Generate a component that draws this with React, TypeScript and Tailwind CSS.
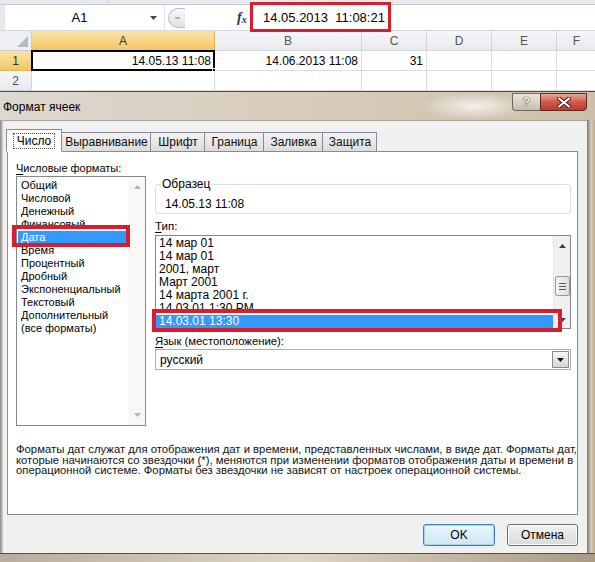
import React from "react";

const formats = [
  "Общий",
  "Числовой",
  "Денежный",
  "Финансовый",
  "Дата",
  "Время",
  "Процентный",
  "Дробный",
  "Экспоненциальный",
  "Текстовый",
  "Дополнительный",
  "(все форматы)",
];

const types = [
  "14 мар 01",
  "14 мар 01",
  "2001, март",
  "Март 2001",
  "14 марта 2001 г.",
  "14.03.01 1:30 PM",
  "14.03.01 13:30",
];

const tabs = [
  { label: "Число", w: "w-[56px]", active: true },
  { label: "Выравнивание", w: "w-[90px]" },
  { label: "Шрифт", w: "w-[55px]" },
  { label: "Граница", w: "w-[60px]" },
  { label: "Заливка", w: "w-[60px]" },
  { label: "Защита", w: "w-[55px]" },
];

const cols = [
  { name: "A", w: "w-[183px]", sel: true },
  { name: "B", w: "w-[147px]" },
  { name: "C", w: "w-[65px]" },
  { name: "D", w: "w-[65px]" },
  { name: "E", w: "w-[65px]" },
  { name: "F", w: "w-[40px]" },
];

function Arrow({ up, color = "#9a9a9a" }: { up?: boolean; color?: string }) {
  return (
    <svg width="7" height="4" viewBox="0 0 7 4">
      {up ? <path d="M0 4 L3.5 0 L7 4 Z" fill={color} /> : <path d="M0 0 L3.5 4 L7 0 Z" fill={color} />}
    </svg>
  );
}

function SheetHeader() {
  return (
    <div className="flex h-[20px]">
      <div className="w-[32px] shrink-0 relative bg-[#eef0f3] border-r border-b border-[#c9ced5]">
        <svg className="absolute right-[3px] bottom-[3px]" width="11" height="11" viewBox="0 0 11 11">
          <path d="M11 0 L11 11 L0 11 Z" fill="#b6bcc4" />
        </svg>
      </div>
      {cols.map((c) => (
        <div
          key={c.name}
          className={`${c.w} shrink-0 flex items-center justify-center border-r border-b text-[12px] ${
            c.sel
              ? "bg-gradient-to-b from-[#fbe3a6] to-[#f2c764] border-r-[#e1b353] border-b-[#f29436] text-[#333]"
              : "bg-gradient-to-b from-[#f6f7f9] to-[#e7eaee] border-[#d0d5db] text-[#555]"
          }`}
        >
          {c.name}
        </div>
      ))}
    </div>
  );
}

function SheetRow({ n, sel, cells }: { n: string; sel?: boolean; cells: string[] }) {
  return (
    <div className="flex h-[20px]">
      <div
        className={`w-[32px] shrink-0 flex items-center justify-center border-r border-b text-[12px] ${
          sel
            ? "bg-gradient-to-b from-[#fbe3a6] to-[#f2c764] border-r-[#f29436] border-b-[#e1b353] text-[#333]"
            : "bg-gradient-to-b from-[#f6f7f9] to-[#e7eaee] border-[#d0d5db] text-[#555]"
        }`}
      >
        {n}
      </div>
      {cols.map((c, i) => (
        <div
          key={c.name}
          className={`${c.w} shrink-0 relative flex items-center justify-end pr-[3px] border-r border-b border-[#dadcdd] bg-white text-[12px] text-black`}
        >
          {cells[i] || ""}
          {sel && i === 0 && (
            <>
              <div className="absolute -left-[1px] -top-[1px] -right-[1px] -bottom-[1px] border-2 border-black" />
              <div className="absolute -right-[4px] -bottom-[4px] w-[6px] h-[6px] bg-black border border-white" />
            </>
          )}
        </div>
      ))}
    </div>
  );
}

function Excel() {
  return (
    <div className="h-[91px] flex flex-col bg-white overflow-hidden">
      <div className="h-[5px] flex bg-[#e6eaef] border-b border-[#c3cad3]">
        <div className="w-[108px] border-r border-[#cfd5dc]" />
        <div className="w-[222px] border-r border-[#cfd5dc]" />
      </div>
      <div className="h-[26px] flex items-stretch border-b border-[#d5d9de] bg-white">
        <div className="w-[5px] bg-[#e6eaef]" />
        <div className="w-[160px] flex items-center border-r border-[#dde1e5]">
          <span className="flex-1 text-center text-[13px] pl-[4px]">A1</span>
          <span className="mr-[7px] mt-[1px]">
            <Arrow color="#444" />
          </span>
        </div>
        <div className="w-[70px] flex items-center">
          <div className="ml-[3px] w-[17px] h-[20px] rounded-l-full border border-[#b9bec5] border-r-0 bg-gradient-to-b from-[#f7f8f9] to-[#dfe3e7] flex items-center justify-center">
            <div className="w-[5px] h-[2px] bg-[#a5acb5] rounded-full" />
          </div>
        </div>
        <div className="w-[20px] flex items-center pl-[2px] font-['Liberation_Serif',serif] italic font-bold text-[14px] text-[#333]">
          f<span className="text-[10px] mt-[3px]">x</span>
        </div>
        <div className="flex-1 flex items-center pl-[8px] text-[13px]">14.05.2013&nbsp;&nbsp;11:08:21</div>
      </div>
      <SheetHeader />
      <SheetRow n="1" sel cells={["14.05.13 11:08", "14.06.2013 11:08", "31"]} />
      <SheetRow n="2" cells={[]} />
    </div>
  );
}

function TitleBar() {
  return (
    <div className="h-[29px] relative flex items-center border-t border-[#4f4b45] bg-gradient-to-r from-[#ddd8d0] via-[#d8ccbb] to-[#cdbfaa]">
      <div className="absolute left-[420px] top-0 w-[110px] h-[28px] bg-[radial-gradient(ellipse_at_center,rgba(255,255,255,0.75),rgba(255,255,255,0)_70%)]" />
      <span className="relative pl-[3px] pt-[1px] text-[12px] text-black">Формат ячеек</span>
      <div className="absolute right-[8px] top-[1px] flex">
        <div className="w-[28px] h-[18px] rounded-bl-[4px] border border-[#6d675f] border-r-0 bg-gradient-to-b from-[#ebe5dc] to-[#c8bdad] flex items-center justify-center text-[13px] font-bold text-[#f4f1ec] [text-shadow:0_0_1px_#333,0_0_1px_#333]">
          ?
        </div>
        <div className="w-[47px] h-[18px] rounded-br-[4px] border border-[#5a2a24] bg-gradient-to-b from-[#e7a79c] via-[#cf5a4c] to-[#c0392b] flex items-center justify-center">
          <svg width="14" height="11" viewBox="0 0 14 11">
            <path d="M2 1.5 L12 9.5 M12 1.5 L2 9.5" stroke="#3a1a16" strokeWidth="4" strokeLinecap="round" />
            <path d="M2 1.5 L12 9.5 M12 1.5 L2 9.5" stroke="#ffffff" strokeWidth="2.2" strokeLinecap="round" />
          </svg>
        </div>
      </div>
    </div>
  );
}

function FormatList() {
  return (
    <div className="w-[130px] h-[250px] flex border border-[#828790] bg-white">
      <div className="flex-1 pt-[1.5px] pl-[1px] text-[11px]">
        {formats.map((f) => (
          <div
            key={f}
            className={`h-[13px] leading-[13px] pl-[3px] whitespace-nowrap ${f === "Дата" ? "bg-[#3399ff] text-white" : ""}`}
          >
            {f}
          </div>
        ))}
      </div>
      <div className="w-[16px] flex flex-col items-center justify-between py-[8px] bg-[#f8f8f8] border-l border-[#efefef]">
        <Arrow up color="#b4b4b4" />
        <Arrow color="#b4b4b4" />
      </div>
    </div>
  );
}

function TypeList() {
  return (
    <div className="h-[94px] flex border border-[#828790] bg-white overflow-hidden">
      <div className="flex-1 pt-[0.5px] overflow-hidden">
        {types.map((t, i) => (
          <div
            key={i}
            className={`h-[13px] leading-[13px] pl-[3px] whitespace-nowrap ${i === 6 ? "bg-[#3399ff] text-white" : ""}`}
          >
            {t}
          </div>
        ))}
      </div>
      <div className="w-[17px] flex flex-col items-center bg-[#f0f0f0] border-l border-[#e6e6e6]">
        <div className="h-[17px] flex items-center justify-center pt-[2px]">
          <Arrow up color="#404040" />
        </div>
        <div className="flex-1 w-full flex flex-col items-center pt-[23px]">
          <div className="w-[15px] h-[20px] rounded-[2px] border border-[#979797] bg-gradient-to-r from-[#f4f4f4] to-[#dcdcdc] flex flex-col items-center justify-center gap-[2px]">
            <div className="w-[7px] h-px bg-[#5a5a5a]" />
            <div className="w-[7px] h-px bg-[#5a5a5a]" />
            <div className="w-[7px] h-px bg-[#5a5a5a]" />
          </div>
        </div>
        <div className="h-[17px] flex items-center justify-center">
          <Arrow color="#404040" />
        </div>
      </div>
    </div>
  );
}

function Dialog() {
  return (
    <div className="flex-1 flex flex-col">
      <TitleBar />
      <div className="flex-1 flex">
        <div className="w-[3px] shrink-0 bg-gradient-to-r from-[#8a8a8a] to-[#d8d2c8]" />
        <div className="flex-1 min-w-0 overflow-hidden flex flex-col bg-[#f0f0f0] border-t border-[#a9a49b]">
          {/* tabs */}
          <div className="flex items-end h-[30px] pl-[3px]">
            {tabs.map((t) => (
              <div
                key={t.label}
                className={`${t.w} shrink-0 flex items-center justify-center border border-[#898c95] ${
                  t.active
                    ? "h-[23px] -mb-px z-10 bg-white border-b-white"
                    : "h-[19px] -ml-px bg-gradient-to-b from-[#f3f3f3] to-[#dcdcdc] border-b-0 text-[#111]"
                }`}
              >
                {t.active ? (
                  <span className="px-[3px] leading-[14px] border border-dotted border-[#555]">{t.label}</span>
                ) : (
                  <span className="ml-px">{t.label}</span>
                )}
              </div>
            ))}
          </div>
          {/* panel */}
          <div className="ml-[4px] mr-[9px] h-[364px] bg-white border border-[#898c95] pl-[8px] pt-[8px] flex flex-col overflow-hidden">
            <div className="flex gap-[9px]">
              <div className="flex flex-col">
                <div className="h-[16px] leading-[16px] text-[11px]">
                  <span className="underline underline-offset-2">Ч</span>исловые форматы:
                </div>
                <FormatList />
              </div>
              <div className="w-[416px] flex flex-col">
                <div className="mt-[24px] h-[30px] relative border border-[#d5dfe5] rounded-[3px] pl-[9px] pt-[12px] leading-[14px]">
                  <span className="absolute left-[5px] -top-[8px] bg-white px-px leading-[14px]">Образец</span>
                  14.05.13 11:08
                </div>
                <div className="mt-[5px] h-[15px] leading-[15px] text-[11.5px]">
                  <span className="underline underline-offset-2">Т</span>ип:
                </div>
                <div className="mt-[1px]">
                  <TypeList />
                </div>
                <div className="mt-[5px] h-[14px] leading-[14px] text-[11.3px]">
                  <span className="underline underline-offset-2">Я</span>зык (местоположение):
                </div>
                <div className="mt-[1px] h-[21px] flex items-stretch border border-[#abadb3] bg-white">
                  <div className="flex-1 flex items-center pl-[4px]">русский</div>
                  <div className="w-[17px] m-px flex items-center justify-center border border-[#8c8c8c] bg-gradient-to-b from-[#f4f4f4] to-[#d5d5d5]">
                    <Arrow color="#111" />
                  </div>
                </div>
              </div>
            </div>
            <div className="mt-[18px] leading-[10.5px] text-[11.3px] text-[#111]">
              <div className="whitespace-nowrap">
                Форматы дат служат для отображения дат и времени, представленных числами, в виде дат. Форматы дат,
              </div>
              <div className="whitespace-nowrap">
                которые начинаются со звездочки (*), меняются при изменении форматов отображения даты и времени в
              </div>
              <div className="whitespace-nowrap">
                операционной системе. Форматы без звездочки не зависят от настроек операционной системы.
              </div>
            </div>
          </div>
          {/* buttons */}
          <div className="flex justify-end gap-[12px] mr-[9px] mt-[9px]">
            <button className="w-[72px] h-[22px] rounded-[3px] border border-[#3c7fb1] bg-gradient-to-b from-[#eaf6fd] to-[#cfe6f5] shadow-[inset_0_0_0_1px_#a5d5f2] text-[12px]">
              OK
            </button>
            <button className="w-[71px] h-[22px] rounded-[3px] border border-[#707070] bg-gradient-to-b from-[#f2f2f2] to-[#dadada] shadow-[inset_0_0_0_1px_#fbfbfb] text-[12px]">
              Отмена
            </button>
          </div>
          <div className="flex-1" />
        </div>
        <div className="w-[8px] shrink-0 bg-gradient-to-r from-[#7c776f] via-[#d9cebd] to-[#b8aa92]" />
      </div>
      <div className="h-[9px] border-t border-[#55514b] bg-gradient-to-r from-[#b8ad9c] via-[#e0d6c6] to-[#a99a83]" />
    </div>
  );
}

export default function App() {
  return (
    <div className="relative w-[595px] h-[562px] overflow-hidden flex flex-col bg-[#cfc6b8] font-['Liberation_Sans',Arial,sans-serif] text-[12px] text-black">
      <Excel />
      <Dialog />
      {/* red annotation frames */}
      <div className="absolute left-[250px] top-[2px] w-[141px] h-[30px] border-[3px] border-[#d81e2c]" />
      <div className="absolute left-[12px] top-[225px] w-[118px] h-[22px] border-[4px] border-[#d81e2c]" />
      <div className="absolute left-[152px] top-[309px] w-[410px] h-[23px] border-[4px] border-[#d81e2c]" />
    </div>
  );
}
